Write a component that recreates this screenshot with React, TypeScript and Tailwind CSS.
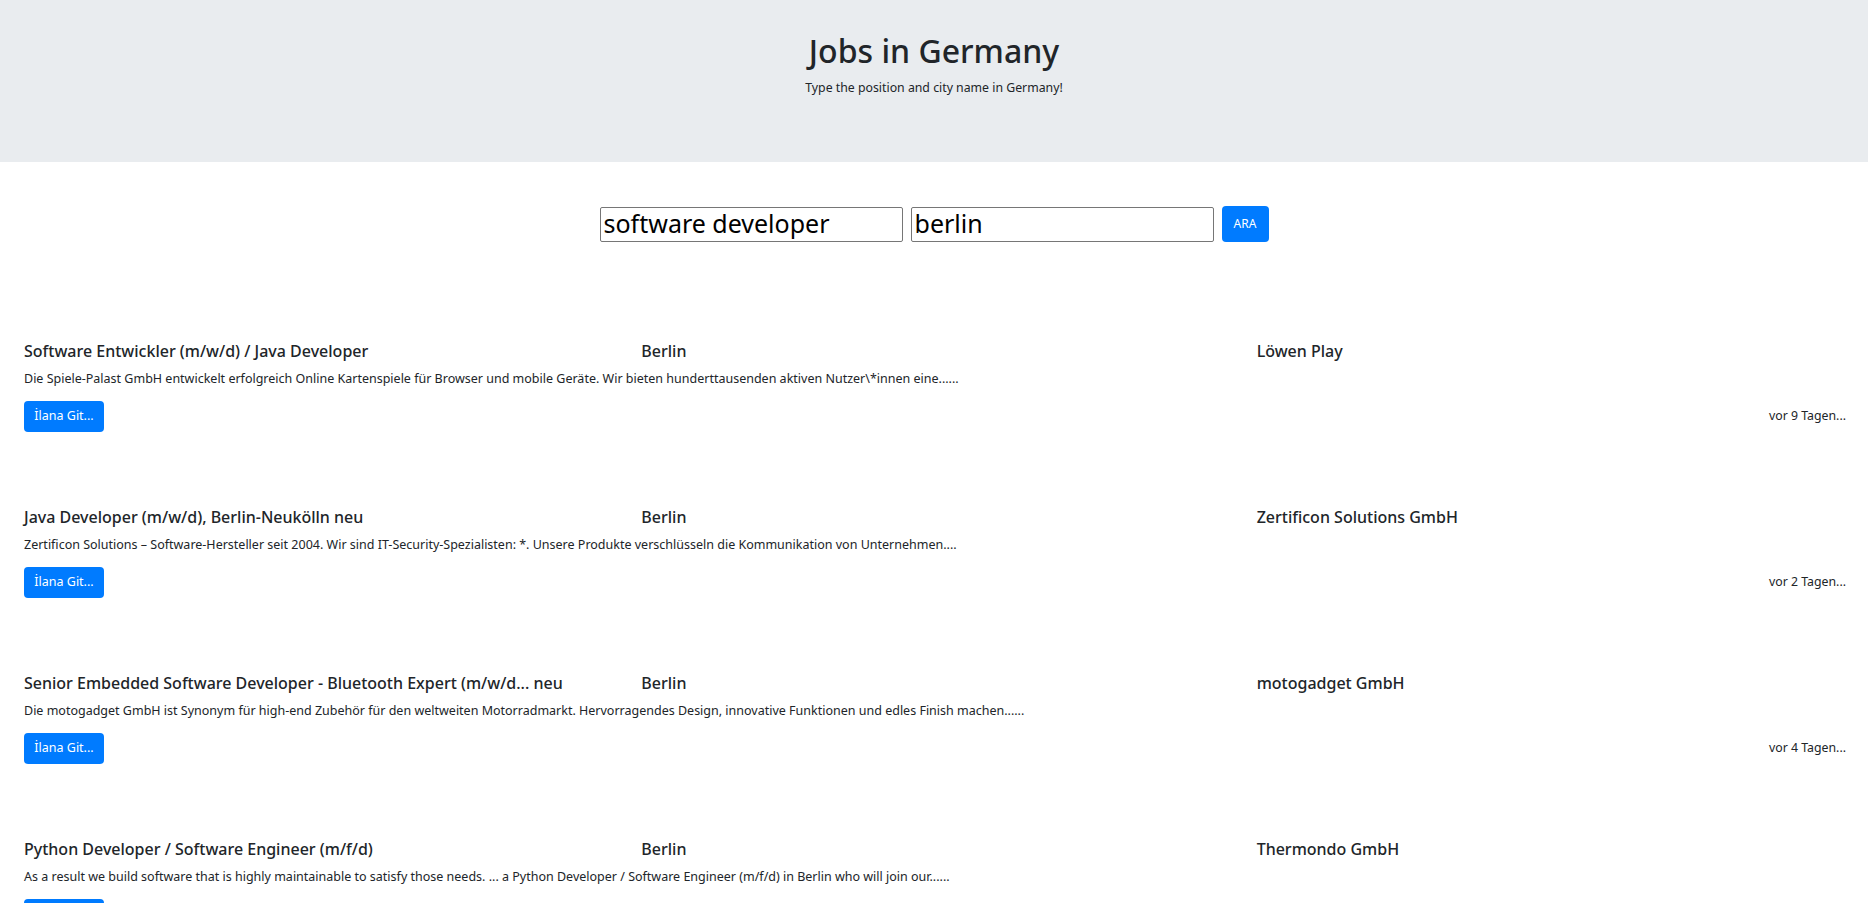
import { useState } from "react";

type Job = {
  title: string;
  city: string;
  company: string;
  desc: string;
  date: string;
};

const jobs: Job[] = [
  {
    title: "Software Entwickler (m/w/d) / Java Developer",
    city: "Berlin",
    company: "Löwen Play",
    desc: "Die Spiele-Palast GmbH entwickelt erfolgreich Online Kartenspiele für Browser und mobile Geräte. Wir bieten hunderttausenden aktiven Nutzer\\*innen eine......",
    date: "vor 9 Tagen...",
  },
  {
    title: "Java Developer (m/w/d), Berlin-Neukölln neu",
    city: "Berlin",
    company: "Zertificon Solutions GmbH",
    desc: "Zertificon Solutions – Software-Hersteller seit 2004. Wir sind IT-Security-Spezialisten: *. Unsere Produkte verschlüsseln die Kommunikation von Unternehmen....",
    date: "vor 2 Tagen...",
  },
  {
    title: "Senior Embedded Software Developer - Bluetooth Expert (m/w/d... neu",
    city: "Berlin",
    company: "motogadget GmbH",
    desc: "Die motogadget GmbH ist Synonym für high-end Zubehör für den weltweiten Motorradmarkt. Hervorragendes Design, innovative Funktionen und edles Finish machen......",
    date: "vor 4 Tagen...",
  },
  {
    title: "Python Developer / Software Engineer (m/f/d)",
    city: "Berlin",
    company: "Thermondo GmbH",
    desc: "As a result we build software that is highly maintainable to satisfy those needs. ... a Python Developer / Software Engineer (m/f/d) in Berlin who will join our......",
    date: "vor 1 Tag...",
  },
];

function JobRow({ job }: { job: Job }) {
  return (
    <div className="mx-2 mb-[74px]">
      <div className="grid grid-cols-3">
        <h5 className="px-4 text-[16px] leading-[22px] font-medium">{job.title}</h5>
        <h5 className="px-4 text-[16px] leading-[22px] font-medium">{job.city}</h5>
        <h5 className="pl-[14px] pr-4 text-[16px] leading-[22px] font-medium">{job.company}</h5>
      </div>
      <p className="px-4 mt-[7px] text-[12.5px] leading-[20px]">{job.desc}</p>
      <div className="pl-4 pr-[14px] mt-[12px] flex items-center justify-between">
        <button className="h-[31px] w-[80px] rounded bg-[#007bff] text-white text-[12.5px]">
          İlana Git...
        </button>
        <span className="text-[12.3px]">{job.date}</span>
      </div>
    </div>
  );
}

export default function App() {
  const [position, setPosition] = useState("software developer");
  const [city, setCity] = useState("berlin");

  return (
    <div className="min-h-screen bg-white text-[#212529] font-['Noto_Sans',sans-serif]">
      {/* Jumbotron */}
      <div className="h-[162px] bg-[#e9ecef] pt-[29px] text-center">
        <h1 className="text-[32px] leading-[43px] font-medium">Jobs in Germany</h1>
        <p className="mt-[6px] text-[12.3px] leading-[20px]">Type the position and city name in Germany!</p>
      </div>

      {/* Search */}
      <div className="mt-[44px] flex items-center justify-center gap-2">
        <input
          value={position}
          onChange={(e) => setPosition(e.target.value)}
          className="h-[35px] w-[303px] rounded-[2px] border border-[#767676] px-[3px] text-[25px] text-black outline-none"
        />
        <input
          value={city}
          onChange={(e) => setCity(e.target.value)}
          className="h-[35px] w-[303px] rounded-[2px] border border-[#767676] px-[3px] text-[25px] text-black outline-none"
        />
        <button className="h-[36px] w-[47px] rounded bg-[#007bff] text-white text-[12px]">ARA</button>
      </div>

      {/* Results */}
      <div className="mt-[98px]">
        {jobs.map((job) => (
          <JobRow key={job.title} job={job} />
        ))}
      </div>
    </div>
  );
}
